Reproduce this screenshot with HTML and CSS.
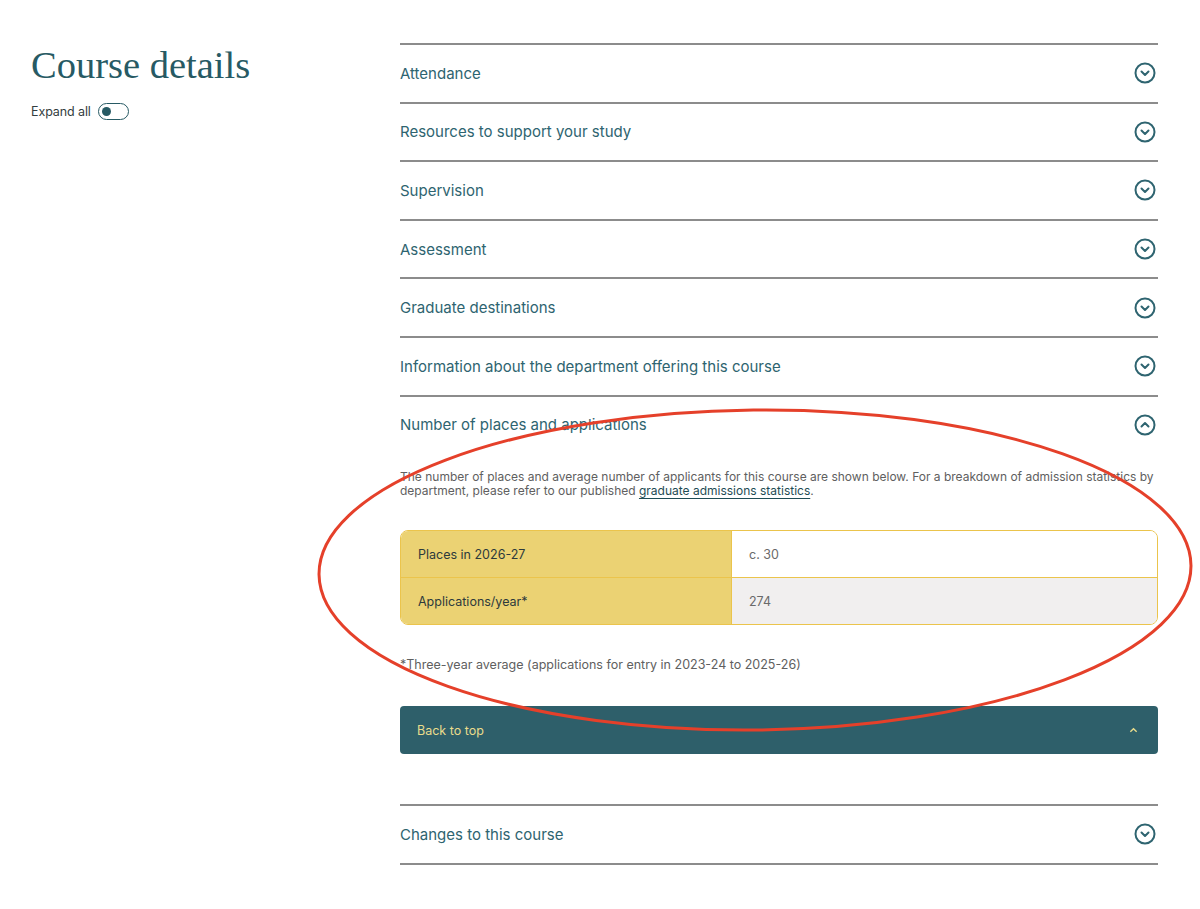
FILE: index.html
```html
<!DOCTYPE html>
<html lang="en">
<head>
  <meta charset="UTF-8">
  <title>Course details</title>
  <link rel="stylesheet" href="styles.css">
</head>
<body>
  <div class="page">
    <aside class="side">
      <h1>Course details</h1>
      <div class="expand">
        <span>Expand all</span>
        <span class="toggle"><span class="knob"></span></span>
      </div>
    </aside>

    <main class="details">
      <div class="item">
        <div class="item-head"><span>Attendance</span>
          <svg class="chev" viewBox="0 0 22 22"><circle cx="11" cy="11" r="9.5"/><path d="M7.5 9.5l3.5 3.5 3.5-3.5"/></svg>
        </div>
      </div>
      <div class="item">
        <div class="item-head"><span>Resources to support your study</span>
          <svg class="chev" viewBox="0 0 22 22"><circle cx="11" cy="11" r="9.5"/><path d="M7.5 9.5l3.5 3.5 3.5-3.5"/></svg>
        </div>
      </div>
      <div class="item">
        <div class="item-head"><span>Supervision</span>
          <svg class="chev" viewBox="0 0 22 22"><circle cx="11" cy="11" r="9.5"/><path d="M7.5 9.5l3.5 3.5 3.5-3.5"/></svg>
        </div>
      </div>
      <div class="item">
        <div class="item-head"><span>Assessment</span>
          <svg class="chev" viewBox="0 0 22 22"><circle cx="11" cy="11" r="9.5"/><path d="M7.5 9.5l3.5 3.5 3.5-3.5"/></svg>
        </div>
      </div>
      <div class="item">
        <div class="item-head"><span>Graduate destinations</span>
          <svg class="chev" viewBox="0 0 22 22"><circle cx="11" cy="11" r="9.5"/><path d="M7.5 9.5l3.5 3.5 3.5-3.5"/></svg>
        </div>
      </div>
      <div class="item">
        <div class="item-head"><span>Information about the department offering this course</span>
          <svg class="chev" viewBox="0 0 22 22"><circle cx="11" cy="11" r="9.5"/><path d="M7.5 9.5l3.5 3.5 3.5-3.5"/></svg>
        </div>
      </div>
      <div class="item open">
        <div class="item-head"><span>Number of places and applications</span>
          <svg class="chev" viewBox="0 0 22 22"><circle cx="11" cy="11" r="9.5"/><path d="M7.5 12.5l3.5-3.5 3.5 3.5"/></svg>
        </div>
        <div class="item-body">
          <p>The number of places and average number of applicants for this course are shown below. For a breakdown of admission statistics by department, please refer to our published <a href="#">graduate admissions statistics</a>.</p>
          <table class="stats">
            <tr><th>Places in 2026-27</th><td>c. 30</td></tr>
            <tr class="alt"><th>Applications/year*</th><td>274</td></tr>
          </table>
          <p class="note">*Three-year average (applications for entry in 2023-24 to 2025-26)</p>
          <a class="back" href="#">Back to top
            <svg viewBox="0 0 10 6"><path d="M1.5 5L5 1.5 8.5 5"/></svg>
          </a>
        </div>
      </div>
      <div class="item last">
        <div class="item-head"><span>Changes to this course</span>
          <svg class="chev" viewBox="0 0 22 22"><circle cx="11" cy="11" r="9.5"/><path d="M7.5 9.5l3.5 3.5 3.5-3.5"/></svg>
        </div>
      </div>
    </main>
  </div>

  <!-- annotation circled on the screenshot -->
  <svg class="mark" viewBox="0 0 1200 909" width="1200" height="909">
    <ellipse cx="755" cy="570" rx="436" ry="160" transform="rotate(-0.6 755 570)"/>
  </svg>
</body>
</html>
```

FILE: styles.css
```css
body {
  margin: 0;
  font-family: 'Inter', 'Lato', sans-serif;
  color: #2c5d68;
  background: #fff;
}
.page {
  display: flex;
  padding: 43px 42px 0 31px;
}
.side {
  width: 369px;
  flex: none;
}
h1 {
  font-family: 'Liberation Serif', serif;
  font-weight: normal;
  font-size: 38.5px;
  line-height: 44px;
  margin: 0;
  color: #275a64;
}
.expand {
  display: flex;
  align-items: center;
  gap: 7px;
  margin-top: 16px;
  font-size: 12.5px;
  letter-spacing: -0.1px;
  color: #333d40;
}
.toggle {
  width: 26px;
  height: 15px;
  border: 1.5px solid #275a64;
  border-radius: 10px;
  display: flex;
  align-items: center;
  padding-left: 3px;
}
.knob {
  width: 9px;
  height: 9px;
  border-radius: 50%;
  background: #275a64;
}
.details {
  flex: 1;
}
.item {
  border-top: 2px solid #8c8c8c;
}
.item.last {
  border-bottom: 2px solid #8c8c8c;
  margin-top: 50px;
}
.item-head {
  height: 56.6px;
  display: flex;
  align-items: center;
  justify-content: space-between;
  font-size: 15px;
  color: #2e6470;
}
.chev {
  width: 22px;
  height: 22px;
  margin-right: 2px;
  fill: none;
  stroke: #2e6470;
  stroke-width: 2;
  stroke-linecap: round;
  stroke-linejoin: round;
}
.item-body {
  padding-top: 17px;
}
.item-body p {
  margin: 0;
  font-size: 12px;
  line-height: 14px;
  color: #606060;
}
.item-body a {
  color: #1f4c55;
  text-decoration: underline;
  text-underline-offset: 3px;
}
.stats {
  width: 100%;
  margin-top: 32px;
  border-collapse: separate;
  border-spacing: 0;
  border: 1px solid #ebc44c;
  border-radius: 8px;
  overflow: hidden;
  font-size: 12.5px;
}
.stats th, .stats td {
  height: 46px;
  padding: 0 17px;
  text-align: left;
  vertical-align: middle;
}
.stats th {
  width: 296px;
  background: #ebd273;
  font-weight: normal;
  color: #2d3a3c;
  border-right: 1px solid #ebc44c;
}
.stats td {
  background: #fff;
  color: #6a6a6a;
}
.stats tr.alt th, .stats tr.alt td {
  border-top: 1px solid #ebc44c;
}
.stats tr.alt td {
  background: #f1efef;
}
.item-body .note {
  margin-top: 33px;
  font-size: 12.5px;
}
.item-body .back {
  display: flex;
  align-items: center;
  justify-content: space-between;
  height: 48px;
  margin-top: 34px;
  padding: 0 20px 0 17px;
  background: #2e5f6a;
  border-radius: 4px;
  color: #e9dc8c;
  font-size: 12.5px;
  text-decoration: none;
}
.back svg {
  width: 9px;
  height: 6px;
  fill: none;
  stroke: #e9dc8c;
  stroke-width: 1.5;
}
.mark {
  position: absolute;
  left: 0;
  top: 0;
  pointer-events: none;
}
.mark ellipse {
  fill: none;
  stroke: #e5402a;
  stroke-width: 3;
}
```
